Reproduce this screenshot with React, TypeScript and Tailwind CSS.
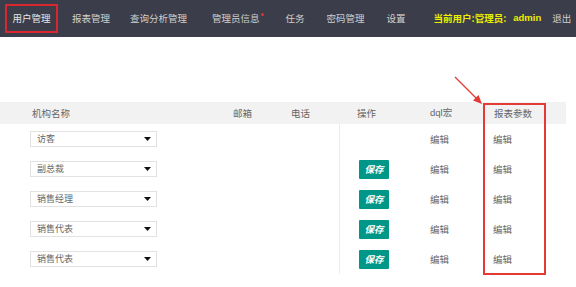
import React from "react";

const font = { fontFamily: '"Noto Sans CJK SC", "Noto Sans", sans-serif' } as const;

const rows = ["访客", "副总裁", "销售经理", "销售代表", "销售代表"];

function Select({ label }: { label: string }) {
  return (
    <div className="flex h-[16px] w-[127px] items-center justify-between border border-[#e2e2e2] bg-white pl-[6px] pr-[5px] text-[9px] text-[#666]">
      <span>{label}</span>
      <svg width="7" height="4" viewBox="0 0 7 4">
        <path d="M0 0 L7 0 L3.5 4 Z" fill="#111" />
      </svg>
    </div>
  );
}

export default function App() {
  return (
    <div className="relative h-[287px] w-[576px] overflow-hidden bg-white" style={font}>
      {/* nav */}
      <div className="flex h-[37px] items-center whitespace-nowrap bg-[#3b3e4a] text-[9.5px] text-[#cfcfcf] [&>*]:shrink-0">
        <div className="ml-[5px] flex h-[29px] w-[53px] items-center justify-center border-2 border-[#d8282e] text-[#e6e6e6]">
          用户管理
        </div>
        <span className="ml-[14px]">报表管理</span>
        <span className="ml-[20px]">查询分析管理</span>
        <span className="ml-[25px] flex items-start">
          管理员信息
          <span className="ml-[1px] mt-[2px] h-[3px] w-[3px] rounded-full bg-[#e0302e]" />
        </span>
        <span className="ml-[22px]">任务</span>
        <span className="ml-[22px]">密码管理</span>
        <span className="ml-[22px]">设置</span>
        <span className="ml-[28px] font-semibold text-[#eeee00]">当前用户:管理员:</span>
        <span className="ml-[7px] font-semibold text-[#eeee00]" style={{ fontFamily: '"Liberation Sans", sans-serif' }}>
          admin
        </span>
        <span className="ml-[11px]">退出</span>
      </div>

      {/* table */}
      <div className="mt-[65px] w-[566px] text-[9.5px] text-[#666]">
        <div className="grid h-[22px] grid-cols-[233px_58px_48px_91px_63px_73px] items-center bg-[#f2f2f2]">
          <span className="pl-[32px]">机构名称</span>
          <span>邮箱</span>
          <span>电话</span>
          <span className="pl-[18px]">操作</span>
          <span style={{ fontFamily: '"Liberation Sans", "Noto Sans CJK SC", sans-serif' }}>dql宏</span>
          <span className="pl-[1px]">报表参数</span>
        </div>
        {rows.map((r, i) => (
          <div
            key={i}
            className="grid h-[30px] grid-cols-[233px_58px_48px_91px_63px_73px] items-center"
          >
            <div className="pl-[30px]">
              <Select label={r} />
            </div>
            <div />
            <div />
            <div className="flex h-full items-center border-l border-[#ececec] pl-[19px]">
              {i > 0 && (
                <div className="flex h-[19px] w-[30px] items-center justify-center rounded-[1px] bg-[#009688] text-[9.5px] font-semibold italic text-white">
                  保存
                </div>
              )}
            </div>
            <span>编辑</span>
            <span>编辑</span>
          </div>
        ))}
      </div>

      {/* annotation box */}
      <div className="absolute left-[483px] top-[103px] h-[172px] w-[63px] border-2 border-[#e53935]" />
      <svg className="absolute left-0 top-0" width="576" height="287">
        <line x1="455" y1="77" x2="478" y2="100" stroke="#e53935" strokeWidth="1.3" />
        <path d="M482 104 L473 100.5 L478.5 95 Z" fill="#e53935" />
      </svg>
    </div>
  );
}
